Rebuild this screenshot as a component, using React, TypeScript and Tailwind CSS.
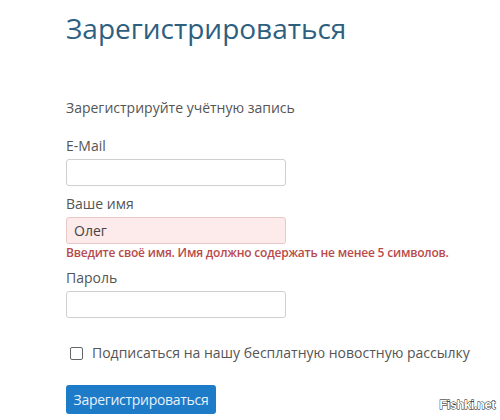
import { useState } from "react";

function Field({
  label,
  value,
  invalid = false,
  type = "text",
}: {
  label: string;
  value?: string;
  invalid?: boolean;
  type?: string;
}) {
  return (
    <div className="flex flex-col">
      <label className="text-[14px] leading-[20px] text-[#555]">{label}</label>
      <input
        type={type}
        defaultValue={value}
        className={
          invalid
            ? "mt-[3px] h-[27px] w-[220px] rounded-[3px] border border-[#ebc8c8] bg-[#fdeaea] px-[7px] text-[14px] text-[#444] outline-none"
            : "mt-[3px] h-[27px] w-[220px] rounded-[3px] border border-[#cfcfcf] bg-white px-[7px] text-[14px] text-[#444] outline-none"
        }
      />
    </div>
  );
}

export default function App() {
  const [subscribe, setSubscribe] = useState(false);

  return (
    <div className="relative h-[420px] w-[500px] overflow-hidden bg-white font-['Open_Sans',sans-serif]">
      <div className="flex flex-col pl-[66px] pt-[8px]">
        <h1 className="text-[28px] leading-[40px] font-normal text-[#2f5f7f]">
          Зарегистрироваться
        </h1>
        <p className="mt-[50px] text-[14px] leading-[20px] text-[#555]">
          Зарегистрируйте учётную запись
        </p>

        <div className="mt-[18px]">
          <Field label="E-Mail" />
        </div>
        <div className="mt-[8px]">
          <Field label="Ваше имя" value="Олег" invalid />
        </div>
        <p className="text-[12px] leading-[18px] font-semibold tracking-[-0.2px] text-[#b84a4a]">
          Введите своё имя. Имя должно содержать не менее 5 символов.
        </p>
        <div className="mt-[6px]">
          <Field label="Пароль" type="password" />
        </div>

        <label className="mt-[25px] flex items-center gap-[9px] pl-[4px]">
          <input
            type="checkbox"
            checked={subscribe}
            onChange={(e) => setSubscribe(e.target.checked)}
            className="h-[13px] w-[13px] appearance-none rounded-[2px] border border-[#666] bg-white"
          />
          <span className="text-[14px] leading-[20px] text-[#555]">
            Подписаться на нашу бесплатную новостную рассылку
          </span>
        </label>

        <div className="mt-[22px]">
          <button
            type="button"
            className="h-[29px] w-[150px] rounded-[3px] bg-[#1e7bc8] text-[14px] tracking-[-0.3px] text-[#e6f2fb]"
          >
            Зарегистрироваться
          </button>
        </div>
      </div>

      <div className="absolute right-[5px] bottom-[8px] text-[13px] leading-[14px] font-bold tracking-[-0.5px] text-white font-['Liberation_Sans',sans-serif] [-webkit-text-stroke:0.8px_#000] [paint-order:stroke_fill]">
        Fishki.net
      </div>
    </div>
  );
}
